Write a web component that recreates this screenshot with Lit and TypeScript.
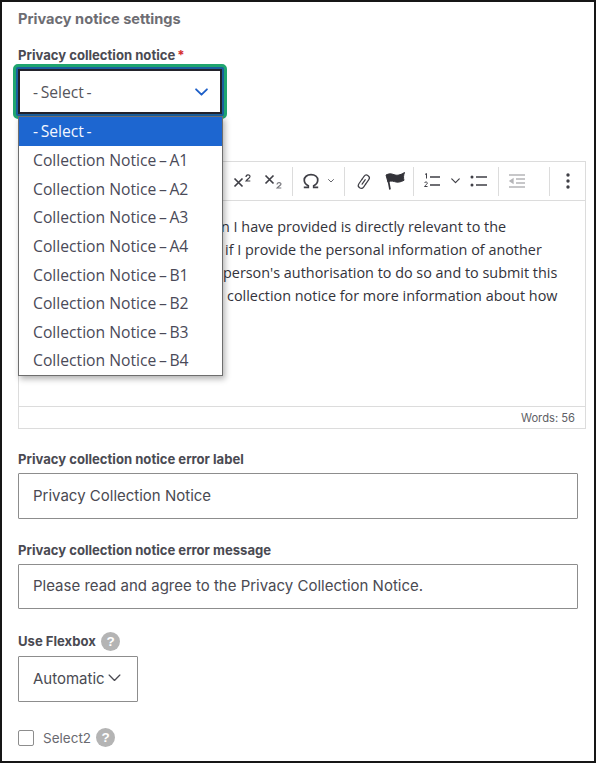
import { LitElement, html, css } from "lit";
import { customElement } from "lit/decorators.js";

const chev = (w: number, h: number, c: string, sw = 1.5) => html`<svg width=${w} height=${h} viewBox="0 0 12 7" fill="none" stroke=${c} stroke-width=${sw} stroke-linecap="round" stroke-linejoin="round"><path d="M1 1l5 5 5-5"/></svg>`;
const help = html`<svg class="help" width="19" height="19" viewBox="0 0 19 19"><circle cx="9.5" cy="9.5" r="9.5" fill="#b4b4b4"/><text x="9.5" y="14.2" text-anchor="middle" font-family="Liberation Sans, sans-serif" font-weight="700" font-size="13.5" fill="#fff">?</text></svg>`;
const options = ["A1", "A2", "A3", "A4", "B1", "B2", "B3", "B4"];
const ink = "#3f3f46";

@customElement("app-root")
export class AppRoot extends LitElement {
  static styles = css`
    :host { display: block; width: 596px; height: 763px; box-sizing: border-box; background: #fff; border: 2px solid #161616; font-family: "Inter", "Liberation Sans", sans-serif; color: #45454d; overflow: hidden; }
    .page { position: relative; padding: 9px 0 0 16px; }
    .title { font-size: 14.6px; font-weight: 700; color: #6d6d73; line-height: 16px; }
    .label { font-size: 13.1px; font-weight: 700; color: #4a4a52; line-height: 15px; }
    .req { color: #d42e2e; margin-left: 2px; }
    .first { margin-top: 21px; }
    .ring { margin: 1px 0 0 -5px; width: 214px; height: 55px; box-sizing: border-box; border: 3px solid #1fa56f; border-radius: 5px; padding: 2px; background: #1a5f9e; }
    .sel { box-sizing: border-box; height: 45px; border: 2px solid #23232b; background: #fff; display: flex; align-items: center; justify-content: space-between; padding: 0 12px 0 13px; font: 15.7px "Open Sans", sans-serif; color: #55555c; }
    .editor { margin-top: 42px; width: 568px; box-sizing: border-box; border: 1px solid #dcdcdc; height: 268px; display: flex; flex-direction: column; }
    .toolbar { height: 38px; border-bottom: 1px solid #dcdcdc; display: flex; align-items: center; padding-left: 209px; flex: none; }
    .tb { height: 28px; display: flex; align-items: center; justify-content: center; flex: none; }
    .w6 { width: 6px; } .w10 { width: 10px; } .w28 { width: 28px; } .w30 { width: 30px; } .w32 { width: 32px; }
    .w35 { width: 35px; } .w36 { width: 36px; } .w38 { width: 38px; }
    .sp2 { width: 2px; flex: none; } .sp4 { width: 4px; flex: none; } .sp10 { width: 10px; flex: none; } .sp14 { width: 14px; flex: none; }
    .sep { width: 1px; height: 29px; background: #dcdcdc; flex: none; }
    .body { flex: 1; padding: 14px 0 0 0; font: 14.4px/23px "Open Sans", sans-serif; color: #33333b; white-space: nowrap; overflow: hidden; }
    .l1 { padding-left: 202px; } .l2 { padding-left: 206px; } .l3 { padding-left: 204px; } .l4 { padding-left: 208px; }
    .foot { height: 21px; border-top: 1px solid #dcdcdc; flex: none; display: flex; align-items: center; justify-content: flex-end; padding-right: 10px; font-size: 11.2px; color: #5f5f66; }
    .f1 { margin-top: 23px; }
    .f2 { margin-top: 24px; }
    .input { margin-top: 6px; box-sizing: border-box; width: 560px; height: 46px; border: 1px solid #8d8d8d; border-radius: 1px; display: flex; align-items: center; padding: 0 0 2px 14px; font-size: 15px; color: #4a4a52; }
    .short { height: 45px; }
    .row { display: flex; align-items: center; gap: 5px; }
    .f3 { margin-top: 23px; }
    .auto { margin-top: 5px; box-sizing: border-box; width: 120px; height: 46px; border: 1px solid #8d8d8d; border-radius: 1px; display: flex; align-items: center; gap: 3px; padding: 0 0 2px 14px; font-size: 15px; color: #4a4a52; }
    .check { margin-top: 26px; display: flex; align-items: center; font-size: 13.5px; color: #6a6a70; }
    .box { width: 16px; height: 16px; box-sizing: border-box; border: 1px solid #8d8d8d; border-radius: 2px; margin-right: 9px; flex: none; }
    .check .help { margin-left: 5px; }
    .menu { position: absolute; left: 16px; top: 114px; width: 205px; box-sizing: border-box; background: #fff; border: 1px solid #6e6e6e; box-shadow: 2px 3px 6px rgba(0,0,0,.3); font: 15.7px "Open Sans", sans-serif; color: #4a4a58; }
    .opt { height: 28.65px; display: flex; align-items: center; padding-left: 14px; white-space: nowrap; }
    .opt.on { background: #1d66d0; color: #f4f7ff; }
  `;

  render() {
    return html`<div class="page">
      <div class="title">Privacy notice settings</div>
      <div class="label first">Privacy collection notice<span class="req">*</span></div>
      <div class="ring"><div class="sel"><span>-\u2009Select\u2009-</span>${chev(13, 8, "#1d5fc8", 1.7)}</div></div>
      <div class="editor">
        <div class="toolbar">
          <div class="tb w30"><svg width="20" height="18" viewBox="0 0 20 18" fill="none" stroke=${ink}><path d="M1.500 6.500l8 8M9.500 6.500l-8 8" stroke-width="1.700"/><path d="M13 5c0-2.800 4-2.800 4-.6 0 1.600-2.600 2.400-4 4.600h4.300" stroke-width="1.200"/></svg></div>
          <div class="tb w32"><svg width="20" height="18" viewBox="0 0 20 18" fill="none" stroke=${ink}><path d="M1.500 3.500l8 8M9.500 3.500l-8 8" stroke-width="1.700"/><path d="M13 12.500c0-2.400 4-2.400 4-.5 0 1.500-2.600 2-4 4h4.300" stroke-width="1.200" stroke="#77777d"/></svg></div>
          <div class="sp2"></div><div class="sep"></div>
          <div class="tb w35"><svg width="18" height="16" viewBox="0 0 20 17" fill="none" stroke=${ink} stroke-width="1.900"><path d="M2 15.500h5v-1.700C4 12.500 2.500 10 2.500 7.500 2.500 4 5.500 1.500 10 1.500s7.500 2.500 7.500 6c0 2.500-1.500 5-4.500 6.300v1.700h5"/></svg></div>
          <div class="tb w6">${chev(9, 5.5, ink, 1.6)}</div>
          <div class="sp10"></div><div class="sep"></div>
          <div class="tb w36"><svg width="19" height="19" viewBox="0 0 19 19" fill="none" stroke=${ink} stroke-width="1.200" stroke-linecap="round"><g transform="rotate(-55 9.500 9.500)"><path d="M10.500 7H5a2.900 2.900 0 0 0 0 5.800h3.500"/><path d="M8.500 12.800H14a2.900 2.900 0 0 0 0-5.800h-3.500"/><path d="M6.500 9.900H12"/></g></svg></div>
          <div class="tb w28"><svg width="21" height="20" viewBox="0 0 21 20"><path d="M1 4c3-1.500 5-1.500 8-.3 3 1 6 .6 10.500-2.200-1 2.800-1.300 5-.5 7.800-3.500 2-7 2.300-9.500 1.300-3-1-4.800-.5-6.500.7z" fill="#333339" stroke="#333339"/><path d="M2.500 4.500l2.500 14" stroke="#333339" stroke-width="1.700" fill="none"/></svg></div>
          <div class="sp4"></div><div class="sep"></div>
          <div class="tb w36"><svg width="18" height="18" viewBox="0 0 18 18" fill="none" stroke=${ink}><path d="M7 5h10M7 13h10" stroke-width="1.500"/><path d="M2 2.500l1.500-1v5" stroke-width="1"/><path d="M1.500 11c.5-1.500 3-1.200 2.800.2 0 1-1.800 1.800-2.800 3.300h3" stroke-width="1"/></svg></div>
          <div class="tb w10">${chev(9, 5.5, ink, 1.6)}</div>
          <div class="tb w38"><svg width="18" height="14" viewBox="0 0 18 14" fill="none" stroke=${ink}><path d="M6 3h11M6 11h11" stroke-width="1.700"/><circle cx="2" cy="3" r="1.500" fill=${ink} stroke="none"/><circle cx="2" cy="11" r="1.500" fill=${ink} stroke="none"/></svg></div>
          <div class="sep"></div>
          <div class="tb w36"><svg width="18" height="14" viewBox="0 0 18 14" fill="none" stroke="#b5b5b8" stroke-width="1.300"><path d="M1 1h16M8 5h9M8 9h9M1 13h16"/><path d="M5 5L2 7l3 2z" fill="#b5b5b8"/></svg></div>
          <div class="sp14"></div><div class="sep"></div>
          <div class="tb w35"><svg width="4" height="16" viewBox="0 0 4 16" fill=${ink}><circle cx="2" cy="2" r="1.700"/><circle cx="2" cy="8" r="1.700"/><circle cx="2" cy="14" r="1.700"/></svg></div>
        </div>
        <div class="body">
          <div class="l1">n I have provided is directly relevant to the</div>
          <div class="l2">if I provide the personal information of another</div>
          <div class="l3">person's authorisation to do so and to submit this</div>
          <div class="l4">collection notice for more information about how</div>
        </div>
        <div class="foot">Words: 56</div>
      </div>
      <div class="label f1">Privacy collection notice error label</div>
      <div class="input">Privacy Collection Notice</div>
      <div class="label f2">Privacy collection notice error message</div>
      <div class="input short">Please read and agree to the Privacy Collection Notice.</div>
      <div class="row f3"><span class="label">Use Flexbox</span>${help}</div>
      <div class="auto">Automatic ${chev(13, 7.5, "#4a4a52", 1.2)}</div>
      <div class="check"><span class="box"></span>Select2${help}</div>
      <div class="menu">
        <div class="opt on">-\u2009Select\u2009-</div>
        ${options.map((o) => html`<div class="opt">Collection Notice\u2009–\u2009${o}</div>`)}
      </div>
    </div>`;
  }
}
